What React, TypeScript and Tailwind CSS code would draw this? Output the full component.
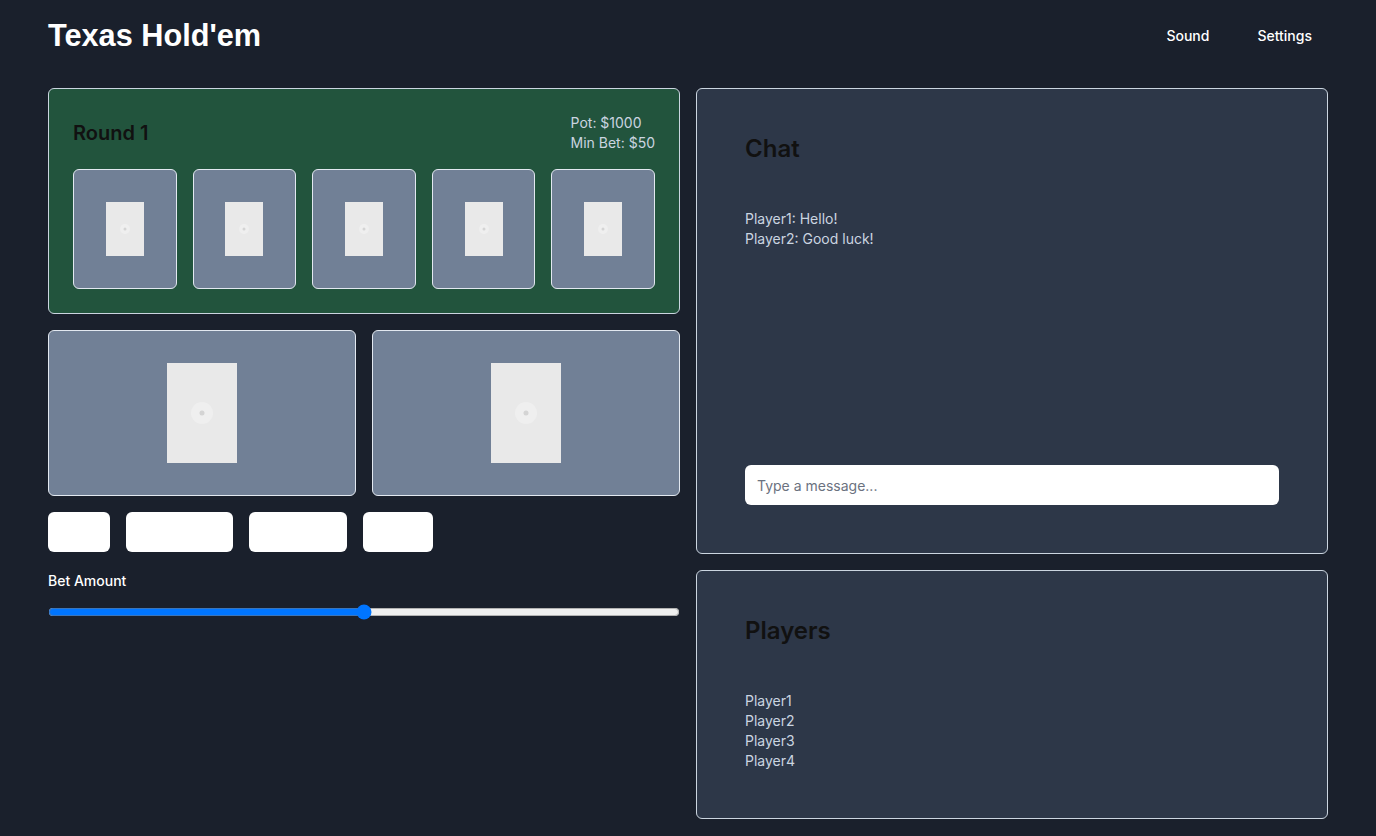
import { useState } from 'react';

const board = [1, 2, 3, 4, 5];
const hand = [1, 2];
const buttons = ['w-[62px]', 'w-[107px]', 'w-[98px]', 'w-[70px]'];
const messages = ['Player1: Hello!', 'Player2: Good luck!'];
const players = ['Player1', 'Player2', 'Player3', 'Player4'];

function CardImage({ big }: { big?: boolean }) {
  const w = big ? 70 : 38;
  const h = big ? 100 : 54;
  return (
    <svg width={w} height={h} viewBox={`0 0 ${w} ${h}`} className="block">
      <rect width={w} height={h} fill="#e9e9e9" />
      <circle cx={w / 2} cy={h / 2} r={big ? 11 : 5} fill="#efefef" />
      <circle cx={w / 2} cy={h / 2} r={big ? 2.5 : 1.5} fill="#d4d4d4" />
    </svg>
  );
}

export default function App() {
  const [bet, setBet] = useState(50);
  const [msg, setMsg] = useState('');

  return (
    <div className="min-h-screen bg-[#1a202c] px-12 font-['Inter',sans-serif]">
      <header className="flex h-[72px] items-center justify-between">
        <h1 className="text-[30.7px] font-bold leading-9 text-white font-['Liberation_Sans',Arial,sans-serif]">
          Texas Hold'em
        </h1>
        <nav className="flex gap-4">
          <button className="px-4 py-2 text-sm font-medium text-white">Sound</button>
          <button className="px-4 py-2 text-sm font-medium text-white">Settings</button>
        </nav>
      </header>

      <main className="grid grid-cols-2 gap-4 pt-4 pb-4">
        <section className="flex flex-col">
          <div className="rounded-md border border-[#cbd5e0] bg-[#22543d] p-6">
            <div className="mb-4 flex items-center justify-between">
              <h2 className="text-xl font-semibold text-[#111]">Round 1</h2>
              <div className="text-sm text-[#cbd5e0]">
                <p>Pot: $1000</p>
                <p>Min Bet: $50</p>
              </div>
            </div>
            <div className="grid grid-cols-5 gap-4">
              {board.map((c) => (
                <div
                  key={c}
                  className="flex h-[120px] items-center justify-center rounded-md border border-[#e2e8f0] bg-[#718096]"
                >
                  <CardImage />
                </div>
              ))}
            </div>
          </div>

          <div className="mt-4 grid grid-cols-2 gap-4">
            {hand.map((c) => (
              <div
                key={c}
                className="flex items-center justify-center rounded-md border border-[#e2e8f0] bg-[#718096] p-8"
              >
                <CardImage big />
              </div>
            ))}
          </div>

          <div className="mt-4 flex gap-4">
            {buttons.map((w, i) => (
              <button key={i} className={`h-10 rounded-md bg-white ${w}`} />
            ))}
          </div>

          <label className="mt-[19px] block text-sm font-medium leading-5 text-white">Bet Amount</label>
          <input
            type="range"
            min={0}
            max={100}
            value={bet}
            onChange={(e) => setBet(Number(e.target.value))}
            className="mt-[13px] w-full accent-[#0075ff]"
          />
        </section>

        <section className="flex flex-col gap-4">
          <div className="flex h-[466px] flex-col rounded-md border border-[#cbd5e0] bg-[#2d3748] p-12">
            <h2 className="text-2xl font-semibold leading-6 text-[#111]">Chat</h2>
            <div className="mt-[48px] flex-1 text-sm text-[#cbd5e0]">
              {messages.map((m) => (
                <p key={m}>{m}</p>
              ))}
            </div>
            <input
              value={msg}
              onChange={(e) => setMsg(e.target.value)}
              placeholder="Type a message..."
              className="h-10 w-full rounded-md bg-white px-3 text-sm text-[#111] placeholder:text-[#6b7280] outline-none"
            />
          </div>

          <div className="rounded-md border border-[#cbd5e0] bg-[#2d3748] px-12 pt-12 pb-[47px]">
            <h2 className="text-2xl font-semibold leading-6 text-[#111]">Players</h2>
            <ul className="mt-[48px] text-sm text-[#cbd5e0]">
              {players.map((p) => (
                <li key={p}>{p}</li>
              ))}
            </ul>
          </div>
        </section>
      </main>
    </div>
  );
}
